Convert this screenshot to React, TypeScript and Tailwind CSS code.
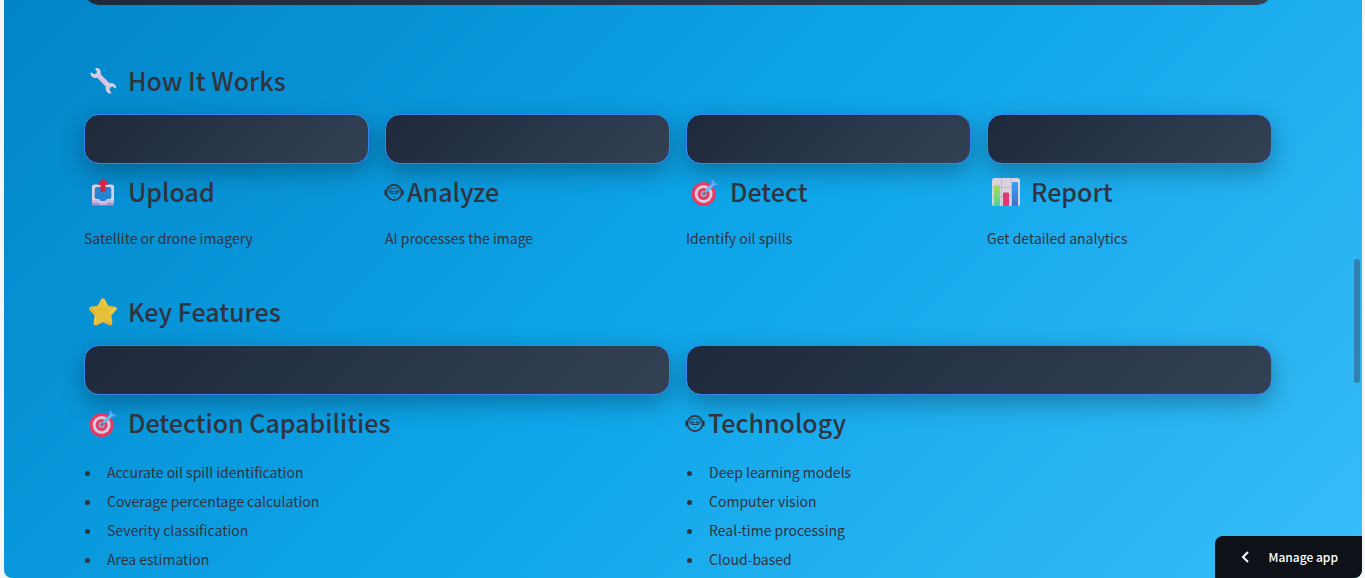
import type { ReactNode } from "react";

function WrenchIcon() {
  return (
    <svg viewBox="0 0 28 28" className="size-7 shrink-0" aria-hidden="true">
      <defs>
        <linearGradient id="wrench" x1="0" y1="0" x2="1" y2="1">
          <stop offset="0" stopColor="#dcd6df" />
          <stop offset="0.5" stopColor="#d3c4e6" />
          <stop offset="1" stopColor="#d8d3dd" />
        </linearGradient>
      </defs>
      <path
        d="M7 1.200C9 .8 11.200 2 11.700 4.400c.2 1 .1 1.900-.2 2.700l9 9.100c1-.4 2.200-.4 3.300 0 2 .7 3.400 2.500 3.400 4.500 0 .8-.7 1.100-1.300.6l-2.200-1.700-2.600.8-.7 2.700 1.700 2.200c.5.600.1 1.300-.6 1.300-2.600.1-4.600-2-4.900-4.300-.1-.9 0-1.700.3-2.500L8.200 10.700c-.9.3-1.700.3-2.500.2C3.300 10.500 1.400 8.600 1.400 6.200c0-.7.6-1 1.200-.6L5 7.300l2.400-.7.600-2.500-1.600-1.700c-.4-.5-.1-1.100.6-1.200z"
        fill="url(#wrench)"
      />
    </svg>
  );
}

function OutboxIcon() {
  return (
    <svg viewBox="0 0 28 28" className="size-7 shrink-0" aria-hidden="true">
      <defs>
        <linearGradient id="outboxArrow" x1="0" y1="0" x2="1" y2="0">
          <stop offset="0" stopColor="#c9234e" />
          <stop offset="1" stopColor="#e3243c" />
        </linearGradient>
      </defs>
      <path d="M3 21h22v5.500a1 1 0 0 1-1 1H4a1 1 0 0 1-1-1z" fill="#a992d0" />
      <rect x="3" y="6.500" width="22" height="17.500" rx="2.500" fill="#d9d0e2" />
      <path d="M3 22h7l2 2h4l2-2h7v2.500h-6l-2.300 2.300h-5.400L9 24.500H3z" fill="#cbbfdd" />
      <path d="M8 9h12a2.300 2.300 0 0 1 2.300 2.300V20l-1.300 1h-3l-1.800 2h-4.400L10 21H7l-1.300-1v-8.700A2.300 2.300 0 0 1 8 9z" fill="#2585d3" />
      <path d="M14 .5a1 1 0 0 1 .8.4l4.200 4.600c.5.600.2 1.300-.6 1.300h-1.900V14h-5V6.800H9.600c-.8 0-1.100-.7-.6-1.300L13.200.9a1 1 0 0 1 .8-.4z" fill="url(#outboxArrow)" />
    </svg>
  );
}

function TargetIcon() {
  return (
    <svg viewBox="0 0 28 28" className="size-7 shrink-0" aria-hidden="true">
      <defs>
        <linearGradient id="dart" x1="0" y1="1" x2="1" y2="0">
          <stop offset="0" stopColor="#64bcf2" />
          <stop offset="1" stopColor="#459ff0" />
        </linearGradient>
      </defs>
      <circle cx="12.600" cy="16" r="12" fill="#e63a64" />
      <circle cx="12.600" cy="16" r="9" fill="#d7c9dc" />
      <circle cx="12.600" cy="16" r="6" fill="#e63a64" />
      <circle cx="12.600" cy="16" r="3.200" fill="#a998b4" />
      <path d="M12.600 16l6-6" stroke="#7c6c88" strokeWidth="2" strokeLinecap="round" />
      <path d="M14.200 14.500c-.5-1.300-.3-2.600.7-3.600l4.600-4.500L20.500.9l2.300 1.500.5 2.400 2.200.4 2.500 1.700-5.900 1.800-4.300 4.400c-1 1-2.300 1.500-3.600 1.400z" fill="url(#dart)" />
      <path d="M19.600 6.300l.9-5.200M22 8.700l5.400-1.600" stroke="#2f7fe0" strokeWidth="0.900" />
      <path d="M16.800 12.200l6.300-6.800" stroke="#7ed0f5" strokeWidth="1" />
    </svg>
  );
}

function ChartIcon() {
  return (
    <svg viewBox="0 0 28 28" className="size-7 shrink-0" aria-hidden="true">
      <defs>
        <linearGradient id="barGreen" x1="0" y1="0" x2="0" y2="1">
          <stop offset="0" stopColor="#a5dc53" />
          <stop offset="1" stopColor="#54cf9d" />
        </linearGradient>
        <linearGradient id="barRed" x1="0" y1="0" x2="0" y2="1">
          <stop offset="0" stopColor="#d9386f" />
          <stop offset="1" stopColor="#f03272" />
        </linearGradient>
        <linearGradient id="barBlue" x1="0" y1="0" x2="0" y2="1">
          <stop offset="0" stopColor="#34a1ef" />
          <stop offset="1" stopColor="#4270c8" />
        </linearGradient>
      </defs>
      <rect width="28" height="28" rx="2.500" fill="#d9d3e0" />
      <path d="M9.500 0v28M19.500 0v28M0 9.500h28M0 18.500h28" stroke="#b9b0c4" strokeWidth="0.700" />
      <path d="M2 8a1 1 0 0 1 1-1h4a1 1 0 0 1 1 1v20H3a1 1 0 0 1-1-1z" fill="url(#barGreen)" />
      <path d="M11 15.500a1 1 0 0 1 1-1h4a1 1 0 0 1 1 1V28h-6z" fill="url(#barRed)" />
      <path d="M20 5a1 1 0 0 1 1-1h4a1 1 0 0 1 1 1v22a1 1 0 0 1-1 1h-5z" fill="url(#barBlue)" />
    </svg>
  );
}

function StarIcon() {
  return (
    <svg viewBox="0 0 28 28" className="size-7 shrink-0" aria-hidden="true">
      <defs>
        <radialGradient id="star" cx="0.5" cy="0.5" r="0.55">
          <stop offset="0" stopColor="#e4bd38" />
          <stop offset="0.7" stopColor="#e9c33a" />
          <stop offset="1" stopColor="#f0b429" />
        </radialGradient>
      </defs>
      <path
        d="M12.200 1.300c.8-1.500 2.900-1.500 3.700 0l2.700 5.500c.3.600.9 1 1.600 1.200l5.800.8c1.800.3 2.500 2.200 1.200 3.500l-4.200 4.400c-.5.500-.7 1.200-.6 1.900l1 6.300c.2 1.800-1.600 3.100-3.200 2.300l-5.200-2.700c-.6-.3-1.300-.3-1.900 0l-5.300 2.700c-1.600.8-3.400-.5-3.100-2.300l.9-6.300c.1-.7-.1-1.400-.6-1.900L.8 12.300C-.5 11-.1 9.100 1.800 8.800l5.900-.8c.7-.1 1.300-.6 1.600-1.200z"
        fill="url(#star)"
      />
      <path d="M14.200 1.500l3.100 6.300M26.500 10.200l-5.700 5.400M5.500 26.200l1.300-7.300" stroke="#f8d84b" strokeWidth="1" strokeLinecap="round" fill="none" />
      <path d="M2 10.800l4.600 4M22.300 26.300l-6-2.900" stroke="#d69b28" strokeWidth="1" strokeLinecap="round" />
    </svg>
  );
}

function RobotIcon() {
  return (
    <svg viewBox="1 0 19 19" className="size-[19px] shrink-0 overflow-visible" fill="none" stroke="#31333f" aria-hidden="true">
      <circle cx="10" cy="9.500" r="7.600" strokeWidth="1.600" />
      <path d="M1.300 7.500v4M18.700 7.500v4" strokeWidth="1.800" strokeLinecap="round" />
      <path d="M10 5.600C8.500 4.400 5 5 5 8c0 1.800 1.500 2.500 3 2.500h4c1.500 0 3-.7 3-2.500 0-3-3.500-3.600-5-2.400z" strokeWidth="0.900" />
      <path d="M6.500 9c.1-1.900 2.500-1.900 2.600 0zM10.900 9c.1-1.900 2.500-1.900 2.600 0z" strokeWidth="0.900" />
      <path d="M9.400 13.600h1.200" strokeWidth="1.200" />
    </svg>
  );
}

function Heading({ icon, children }: { icon: ReactNode; children: ReactNode }) {
  return (
    <h3 className="flex items-center gap-[11px] pl-[5px] text-[25px] leading-8 font-medium whitespace-nowrap">
      {icon}
      <span className="pb-0.5">{children}</span>
    </h3>
  );
}

function RobotHeading({ children }: { children: ReactNode }) {
  return (
    <h3 className="flex items-center gap-[3px] text-[25px] leading-8 font-medium whitespace-nowrap">
      <RobotIcon />
      <span className="pb-0.5">{children}</span>
    </h3>
  );
}

function Card() {
  return (
    <div className="h-[50px] rounded-[15px] border border-[#3b82f6] bg-[linear-gradient(135deg,#1e293b,#334155)] shadow-[0_8px_25px_rgba(0,0,0,0.3)]" />
  );
}

function Step({ heading, text }: { heading: ReactNode; text: string }) {
  return (
    <div>
      <Card />
      <div className="mt-[11px]">{heading}</div>
      <p className="mt-[17px] text-[14px] leading-6">{text}</p>
    </div>
  );
}

function Feature({ heading, items }: { heading: ReactNode; items: string[] }) {
  return (
    <div>
      <Card />
      <div className="mt-[11px]">{heading}</div>
      <ul className="mt-[19px] text-[14px] leading-[27px]">
        {items.map((item) => (
          <li key={item} className="flex items-center gap-[17px]">
            <span className="ml-px size-[5px] rounded-full bg-[#31333f]" />
            <span className="pb-0.5">{item}</span>
          </li>
        ))}
      </ul>
    </div>
  );
}

export default function App() {
  return (
    <div className="h-screen overflow-hidden bg-[#f5f5f5] pr-[3px] pl-1 font-['Noto_Sans_CJK_SC',sans-serif] text-[#31333f]">
      <div className="relative h-full overflow-hidden rounded-b-lg bg-[linear-gradient(135deg,#0284c7_0%,#0ea5e9_50%,#38bdf8_100%)]">
        <main className="pr-[90px] pl-20">
          <div className="flex h-[5px] items-end overflow-hidden">
            <div className="h-12 w-full shrink-0 rounded-[15px] bg-[linear-gradient(135deg,#1e293b,#334155)]" />
          </div>

          <section className="mt-[59px]">
            <Heading icon={<WrenchIcon />}>How It Works</Heading>
            <div className="mt-4 grid grid-cols-4 gap-4">
              <Step heading={<Heading icon={<OutboxIcon />}>Upload</Heading>} text="Satellite or drone imagery" />
              <Step heading={<RobotHeading>Analyze</RobotHeading>} text="AI processes the image" />
              <Step heading={<Heading icon={<TargetIcon />}>Detect</Heading>} text="Identify oil spills" />
              <Step heading={<Heading icon={<ChartIcon />}>Report</Heading>} text="Get detailed analytics" />
            </div>
          </section>

          <section className="mt-[45px]">
            <Heading icon={<StarIcon />}>Key Features</Heading>
            <div className="mt-4 grid grid-cols-2 gap-4">
              <Feature
                heading={<Heading icon={<TargetIcon />}>Detection Capabilities</Heading>}
                items={[
                  "Accurate oil spill identification",
                  "Coverage percentage calculation",
                  "Severity classification",
                  "Area estimation",
                ]}
              />
              <Feature
                heading={<RobotHeading>Technology</RobotHeading>}
                items={["Deep learning models", "Computer vision", "Real-time processing", "Cloud-based"]}
              />
            </div>
          </section>
        </main>

        <div className="absolute top-[259px] right-[2px] h-[124px] w-[6px] rounded-full bg-[#3182b0]" />

        <button
          type="button"
          className="absolute right-0 bottom-0 flex h-[42px] items-center gap-[18px] rounded-tl-lg bg-[#0e1117] px-6 text-[12px] leading-5 font-medium text-white"
        >
          <svg viewBox="0 0 12 12" className="size-3" fill="none" stroke="currentColor" strokeWidth="2" aria-hidden="true">
            <path d="M9 1L4 6l5 5" />
          </svg>
          Manage app
        </button>
      </div>
    </div>
  );
}
